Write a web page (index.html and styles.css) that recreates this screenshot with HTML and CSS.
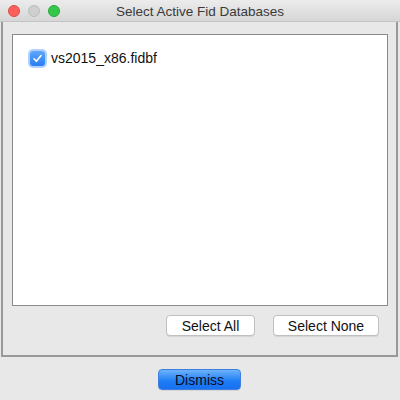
FILE: index.html
```html
<!DOCTYPE html>
<html>
<head>
<meta charset="utf-8">
<link rel="stylesheet" href="styles.css">
</head>
<body>
<div class="window">
  <div class="titlebar">
    <div class="lights">
      <span class="light red"></span>
      <span class="light gray"></span>
      <span class="light green"></span>
    </div>
    <div class="title">Select Active Fid Databases</div>
  </div>
  <div class="panel">
    <div class="list">
      <label class="item">
        <span class="check"><svg width="11" height="11" viewBox="0 0 11 11"><path d="M2 5.8 L4.4 8.3 L9 2.6" fill="none" stroke="#fff" stroke-width="1.6" stroke-linecap="round" stroke-linejoin="round"/></svg></span>
        <span class="name">vs2015_x86.fidbf</span>
      </label>
    </div>
    <div class="row">
      <button class="btn">Select All</button>
      <button class="btn">Select None</button>
    </div>
  </div>
  <div class="footer">
    <button class="btn primary">Dismiss</button>
  </div>
</div>
</body>
</html>
```
FILE: styles.css
```css
html, body { margin: 0; padding: 0; }
body {
  width: 400px; height: 400px; overflow: hidden;
  background: #e8e8e8;
  font-family: "Liberation Sans", Arial, sans-serif;
  color: #1a1a1a;
}
.window { width: 400px; height: 400px; display: flex; flex-direction: column; }
.titlebar {
  height: 22px; position: relative; flex: none;
  background: linear-gradient(#ececec, #d6d6d6);
  border-bottom: 1px solid #c4c4c4;
  box-sizing: border-box;
}
.lights { position: absolute; left: 8px; top: 5px; display: flex; gap: 8px; }
.light { width: 12px; height: 12px; border-radius: 50%; box-sizing: border-box; }
.red { background: #fc605b; border: 1px solid #de4a44; }
.gray { background: #cfcfcf; border: 1px solid #bcbcbc; }
.green { background: #34c84a; border: 1px solid #27a83a; }
.title { text-align: center; font-size: 13.5px; line-height: 23px; color: #3a3a3a; }
.panel {
  margin: 0 2px 0 1px; flex: none;
  height: 335px; box-sizing: border-box;
  border-left: 2px solid #999; border-right: 2px solid #999; border-bottom: 2px solid #999;
  background: #e8e8e8;
  padding: 12px 8px 0 9px;
  display: flex; flex-direction: column;
}
.list {
  height: 272px; box-sizing: border-box; flex: none;
  background: #fff;
  border: 1px solid #8a8a8a;
  padding: 15px 0 0 17px;
}
.item { display: flex; align-items: center; gap: 6px; font-size: 14px; }
.check {
  width: 15px; height: 15px; border-radius: 3px; box-sizing: border-box;
  background: linear-gradient(#5ea6fb, #2a7cf3);
  display: flex; align-items: center; justify-content: center;
  box-shadow: 0 0 0 2px rgba(80,150,250,0.45);
}
.check svg { display: block; }
.name { color: #111; }
.row { display: flex; justify-content: flex-end; gap: 18px; padding: 9px 9px 0 0; }
.btn {
  font-family: "Liberation Sans", Arial, sans-serif;
  font-size: 14px; height: 21px; padding: 0; color: #111;
  background: #fff; border: 1px solid #c0c0c0; border-radius: 4px;
  box-shadow: 0 1px 0 rgba(0,0,0,0.08);
}
.row .btn:first-child { width: 89px; }
.row .btn:last-child { width: 106px; }
.footer { display: flex; justify-content: center; padding-top: 12px; padding-right: 1px; }
.primary {
  width: 83px; color: #0a0a2a;
  background: linear-gradient(#6cb3fa, #1c7cf5 60%, #1970f0);
  border: 1px solid #3d7fe0;
}
```
